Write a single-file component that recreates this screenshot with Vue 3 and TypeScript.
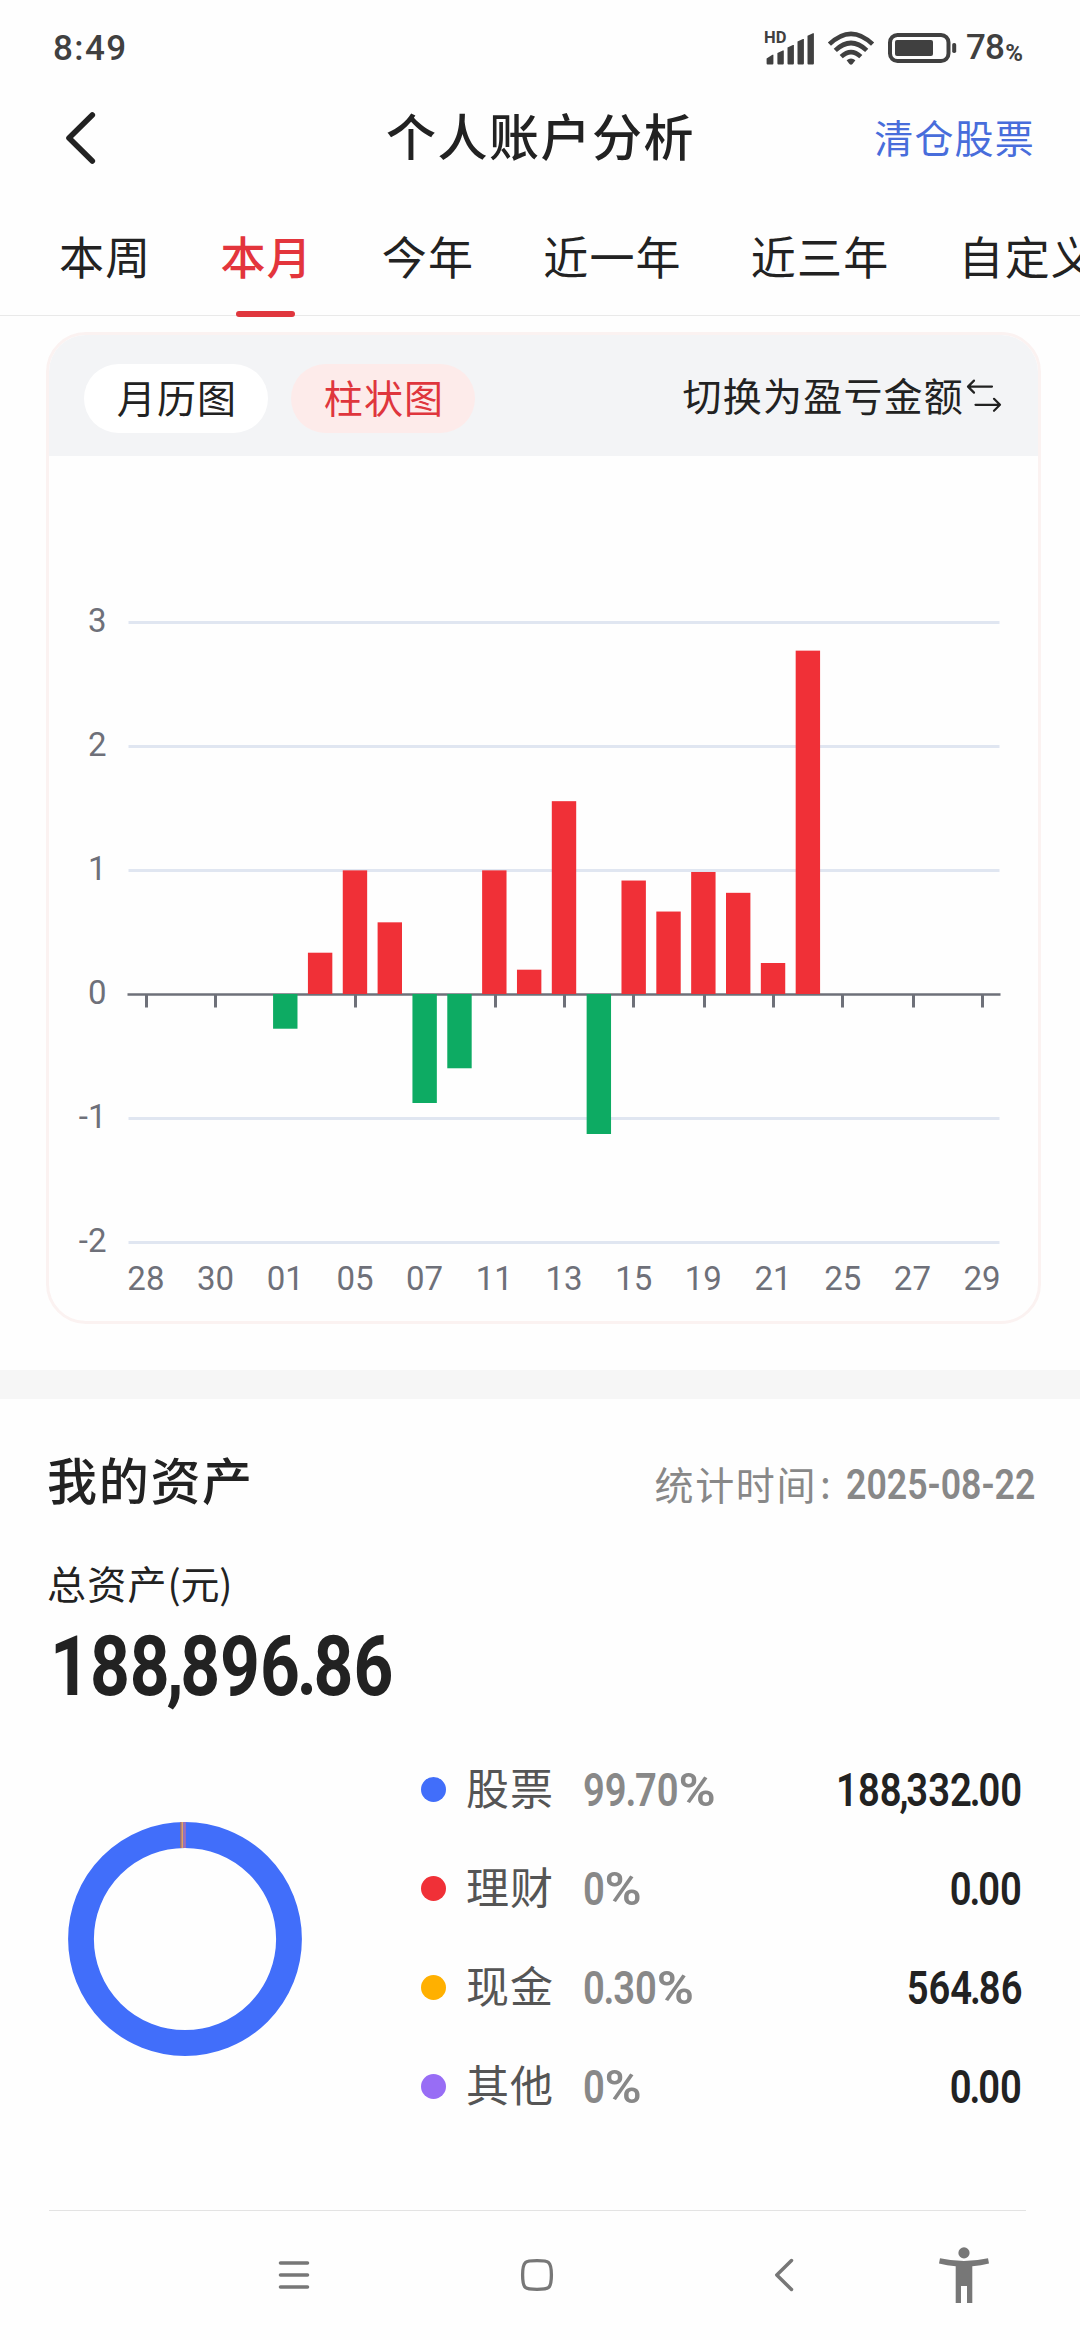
<script setup lang="ts">
interface Tab {
  label: string
  active?: boolean
}

interface Asset {
  name: string
  percent: string
  amount: string
  color: string
}

const tabs: Tab[] = [
  { label: '本周' },
  { label: '本月', active: true },
  { label: '今年' },
  { label: '近一年' },
  { label: '近三年' },
  { label: '自定义' },
]

const total = '188,896.86'

const assets: Asset[] = [
  { name: '股票', percent: '99.70', amount: '188,332.00', color: '#416efa' },
  { name: '理财', percent: '0', amount: '0.00', color: '#f03037' },
  { name: '现金', percent: '0.30', amount: '564.86', color: '#ffb000' },
  { name: '其他', percent: '0', amount: '0.00', color: '#986df5' },
]

// Splits a figure so that its separators can be set tighter than its digits
const parts = (s: string): string[] => s.split(/([.,])/)
const isSep = (s: string): boolean => s === '.' || s === ','

// Chart geometry, in pixels of the plot's own viewBox
const plotLeft = 79.5
const plotRight = 950.5
const zeroY = 538
const unit = 124
const step = (plotRight - plotLeft) / 25
const barWidth = 24.4

const levels = [3, 2, 1, 0, -1, -2]
const dates = ['28', '30', '01', '05', '07', '11', '13', '15', '19', '21', '25', '27', '29']
const ticks = [97.5, 166.5, 236.5, 306.5, 375.5, 446.5, 515.5, 584.5, 655.5, 724.5, 793.5, 864.5, 933.5]
const firstBar = 4
const returns = [
  -0.28, 0.333, 0.997, 0.578, -0.879, -0.599, 0.997, 0.196,
  1.555, -1.129, 0.915, 0.665, 0.984, 0.816, 0.25, 2.769,
]

const centerX = (i: number): number => plotLeft + step * (i + 0.5)
const levelY = (v: number): number => zeroY - v * unit

const bars = returns.map((v, i) => ({
  x: centerX(i + firstBar) - barWidth / 2,
  y: v > 0 ? levelY(v) : zeroY,
  h: Math.abs(v) * unit,
  color: v > 0 ? '#f03037' : '#0dab63',
}))
</script>

<template>
  <div class="page">
    <div class="status">
      <span class="clock">8:49</span>
      <div class="status-right">
        <span class="hd">HD</span>
        <svg class="signal" width="52" height="34" viewBox="0 0 52 34">
          <path
            d="M2.6 32.4v-5l5.800-3.600h1v8.600a1 1 0 0 1-1 1H3.600a1 1 0 0 1-1-1zM13.400 32.400v-10.500l5.400-2.500h1v13a1 1 0 0 1-1 1h-4.400a1 1 0 0 1-1-1zM23.500 32.400V16.500l5.400-2.500h1v18.400a1 1 0 0 1-1 1h-4.400a1 1 0 0 1-1-1zM33.500 32.400V10.500L38.900 8h1v24.400a1 1 0 0 1-1 1h-4.400a1 1 0 0 1-1-1zM43.500 32.400V4.800L48.900 2.300h1v30.100a1 1 0 0 1-1 1h-4.400a1 1 0 0 1-1-1z"
            fill="#404040"
          />
        </svg>
        <svg class="wifi" width="48" height="34" viewBox="0 0 48 34">
          <g fill="none" stroke="#404040" stroke-width="4.600">
            <path d="M2.400 13.200Q24-7.600 45.600 13.200" />
            <path d="M8.300 19.400Q24 4.600 39.700 19.400" />
            <path d="M14.200 25.600Q24 16.600 33.800 25.600" />
          </g>
          <path d="M19.600 29.200Q24 25.800 28.400 29.200L25.500 33Q24 34.300 22.500 33z" fill="#404040" />
        </svg>
        <svg class="battery" width="70" height="32" viewBox="0 0 70 32">
          <rect x="2" y="3" width="58.500" height="26" rx="7.500" fill="none" stroke="#404040" stroke-width="4" />
          <rect x="7" y="8" width="38" height="16" rx="2" fill="#404040" />
          <rect x="64.200" y="11" width="4" height="10" rx="1.800" fill="#404040" />
        </svg>
        <span class="level">78</span><span class="pct">%</span>
      </div>
    </div>

    <header class="header">
      <svg class="back" width="32" height="54" viewBox="0 0 32 54">
        <path d="M27.300 4L4 27L27.300 50" fill="none" stroke="#222" stroke-width="5.600" stroke-linecap="round" stroke-linejoin="round" />
      </svg>
      <h1 class="title">个人账户分析</h1>
      <a class="link">清仓股票</a>
    </header>

    <nav class="tabs">
      <span v-for="t in tabs" :key="t.label" class="tab" :class="{ active: t.active }">{{ t.label }}</span>
    </nav>

    <section class="card">
      <div class="card-head">
        <span class="pill">月历图</span>
        <span class="pill selected">柱状图</span>
        <span class="switch">切换为盈亏金额</span>
        <svg class="swap" width="36" height="36" viewBox="0 0 36 36">
          <g fill="none" stroke="#222" stroke-width="2.200" stroke-linecap="round" stroke-linejoin="round">
            <path d="M26 8.600H2M8 2.600L2 8.600L8 14.600" />
            <path d="M9.500 26.800H34M28 20.800L34 26.800L28 32.800" />
          </g>
        </svg>
      </div>
      <svg class="chart" width="989" height="864" viewBox="0 0 989 864">
        <g v-for="v in levels" :key="v">
          <line v-if="v !== 0" :x1="plotLeft" :x2="plotRight" :y1="levelY(v) + 0.5" :y2="levelY(v) + 0.5" stroke="#e0e6f1" stroke-width="3" />
          <text class="axis" text-anchor="end" x="57.500" :y="levelY(v) + 9.500">{{ v }}</text>
        </g>
        <g stroke="#6e7079" stroke-width="3">
          <line v-for="x in ticks" :key="x" :x1="x" :x2="x" y1="538" y2="551.500" />
        </g>
        <line :x1="plotLeft - 1" :x2="plotRight + 1" y1="538.500" y2="538.500" stroke="#6e7079" stroke-width="2.600" />
        <rect v-for="(b, i) in bars" :key="i" :x="b.x" :y="b.y" :width="barWidth" :height="b.h" :fill="b.color" />
        <text v-for="(d, i) in dates" :key="d" class="axis" text-anchor="middle" :x="centerX(i * 2)" y="834">{{ d }}</text>
      </svg>
    </section>

    <div class="band"></div>

    <section class="assets">
      <div class="assets-head">
        <h2 class="assets-title">我的资产</h2>
        <span class="stat-label">统计时间</span>
        <span class="stat-colon">:</span>
        <span class="stat-date">2025-08-22</span>
      </div>
      <div class="total-label">总资产<span class="unit">(元)</span></div>
      <div class="total"><span v-for="(p, i) in parts(total)" :key="i" :class="{ sep: isSep(p) }">{{ p }}</span></div>

      <div class="breakdown">
        <svg class="donut" width="234" height="234" viewBox="0 0 234 234">
          <circle cx="117" cy="117" r="104" fill="none" stroke="#416efa" stroke-width="25.800" />
          <path d="M113 0v26" stroke="#a8705f" stroke-width="1.500" />
          <path d="M114.400 0v26" stroke="#e5a262" stroke-width="1.800" />
          <path d="M116.700 0v26" stroke="#a06fb8" stroke-width="2.400" />
        </svg>
        <ul class="legend">
          <li v-for="a in assets" :key="a.name" class="row">
            <i class="dot" :style="{ background: a.color }"></i>
            <span class="name">{{ a.name }}</span>
            <span class="percent"><span v-for="(p, i) in parts(a.percent)" :key="i" :class="{ sep: isSep(p) }">{{ p }}</span><span class="sign">%</span></span>
            <span class="amount"><span v-for="(p, i) in parts(a.amount)" :key="i" :class="{ sep: isSep(p) }">{{ p }}</span></span>
          </li>
        </ul>
      </div>
    </section>

    <footer class="sysnav">
      <svg class="menu" width="32" height="34" viewBox="0 0 32 34">
        <path d="M2.500 5H29.500M2.500 17H29.500M2.500 29H29.500" stroke="#777" stroke-width="3.600" stroke-linecap="round" />
      </svg>
      <svg class="home" width="34" height="34" viewBox="0 0 34 34">
        <path d="M17 2.600C28.500 2.600 31.400 2.600 31.400 17S28.500 31.400 17 31.400S2.600 31.400 2.600 17S5.500 2.600 17 2.600z" fill="none" stroke="#777" stroke-width="3.300" />
      </svg>
      <svg class="prev" width="20" height="34" viewBox="0 0 20 34">
        <path d="M17.500 2.500L2.800 17L17.500 31.500" fill="none" stroke="#777" stroke-width="3.500" stroke-linecap="round" stroke-linejoin="round" />
      </svg>
      <svg class="person" width="50" height="56" viewBox="0 0 50 56">
        <circle cx="25" cy="5.900" r="5.600" fill="#777" />
        <path d="M1 11.200Q25 16.600 49 11.200L50 16.600Q42 18.600 33.300 19.300V56H28V39H22V56H16.700V19.300Q8 18.600 0 16.600z" fill="#777" />
      </svg>
    </footer>
  </div>
</template>

<style>
body {
  background: #fefefe;
}
</style>

<style scoped>
.page {
  width: 1080px;
  height: 2340px;
  overflow: hidden;
  background: #fefefe;
  color: #222;
  font-family: 'Noto Sans CJK SC', 'Noto Sans', sans-serif;
  display: flex;
  flex-direction: column;
}
.status {
  height: 95px;
  flex: none;
  display: flex;
  align-items: center;
  justify-content: space-between;
  padding: 0 58px 0 53px;
  color: #404040;
  font-family: Roboto, sans-serif;
  font-weight: 500;
  font-size: 35px;
  line-height: 40px;
}
.clock {
  padding-top: 2px;
  letter-spacing: 1.400px;
}
.status-right {
  position: relative;
  display: flex;
  align-items: center;
  width: 258px;
}
.hd {
  position: absolute;
  left: 0;
  top: 1px;
  font-size: 16.500px;
  font-weight: 700;
  line-height: 20px;
}
.signal {
  margin-right: 11px;
  flex: none;
}
.wifi {
  margin-right: 13px;
  flex: none;
}
.battery {
  margin-right: 8px;
  flex: none;
}
.level {
  padding-top: 1px;
  letter-spacing: -0.800px;
}
.pct {
  font-size: 24px;
  font-weight: 700;
  line-height: 24px;
  padding-top: 10px;
  margin-left: 1px;
}
.header {
  height: 85px;
  flex: none;
  display: flex;
  align-items: center;
  justify-content: space-between;
  padding: 0 45px 0 65px;
}
.back {
  margin-right: 110px;
}
.title {
  margin: 0;
  padding-bottom: 8px;
  font-size: 50px;
  line-height: 60px;
  font-weight: 500;
  letter-spacing: 1.500px;
}
.link {
  color: #486ddb;
  padding-bottom: 4px;
  font-size: 39px;
  line-height: 50px;
  letter-spacing: 1.200px;
}
.tabs {
  height: 135px;
  flex: none;
  border-bottom: 1px solid #e9e9e9;
  display: flex;
  gap: 69px;
  padding-left: 59px;
  white-space: nowrap;
}
.tab {
  position: relative;
  font-size: 45px;
  line-height: 60px;
  padding-top: 46px;
  letter-spacing: 1.200px;
}
.tab.active {
  color: #e3353c;
  font-weight: 500;
}
.tab.active::after {
  content: '';
  position: absolute;
  left: 16px;
  bottom: -2px;
  width: 59px;
  height: 6px;
  border-radius: 3px;
  background: #e0373e;
}
.card {
  box-sizing: border-box;
  width: 995px;
  height: 992px;
  flex: none;
  margin: 16px 0 0 46px;
  border: 3px solid #fbf2f1;
  border-radius: 40px;
  overflow: hidden;
}
.card-head {
  height: 121px;
  background: #f3f4f6;
  display: flex;
  align-items: center;
  padding: 0 36px 0 35px;
}
.pill {
  width: 184px;
  height: 69px;
  margin: 6px 23px 0 0;
  border-radius: 35px;
  background: #fff;
  text-align: center;
  text-indent: 2px;
  font-size: 39px;
  line-height: 65px;
  letter-spacing: 1.200px;
}
.pill.selected {
  color: #df363d;
  background: #fdebea;
}
.switch {
  margin-left: auto;
  padding-bottom: 4px;
  font-size: 39px;
  line-height: 60px;
  letter-spacing: 1.200px;
}
.swap {
  flex: none;
  margin: 0 0 0 2px;
}
.chart {
  display: block;
}
.axis {
  font: 400 33px Roboto, sans-serif;
  fill: #6e7079;
}
.band {
  height: 29px;
  flex: none;
  margin-top: 46px;
  background: #f6f6f6;
}
.assets {
  height: 811px;
  flex: none;
  margin: 0 54px 0 49px;
  border-bottom: 1px solid #e3e3e3;
  display: flex;
  flex-direction: column;
}
.assets-head {
  display: flex;
  align-items: center;
  height: 70px;
  margin: 46px -9px 0 -2px;
}
.assets-title {
  margin: 0 auto 4px 0;
  font-size: 50px;
  line-height: 60px;
  font-weight: 500;
  letter-spacing: 1.700px;
}
.stat-label {
  color: #888;
  font-size: 39px;
  line-height: 60px;
  padding-top: 6px;
  letter-spacing: 1.600px;
}
.stat-colon {
  box-sizing: border-box;
  color: #888;
  font-size: 39px;
  line-height: 60px;
  width: 29px;
  padding: 4px 0 0 3px;
}
.stat-date {
  color: #888;
  font: 600 42px/60px Roboto, sans-serif;
  width: 189px;
  padding-top: 9px;
  white-space: nowrap;
  transform: scaleX(0.85);
  transform-origin: left center;
}
.total-label {
  margin: 37px 0 0 -2px;
  font-size: 39px;
  line-height: 60px;
  letter-spacing: 1.200px;
}
.unit {
  letter-spacing: -0.300px;
}
.total {
  margin: 5px 0 0 1px;
  font: 700 84px/100px Roboto, sans-serif;
  transform: scaleX(0.828);
  transform-origin: left center;
}
.total .sep {
  margin: 0 -4px;
}
.breakdown {
  display: flex;
  margin-top: 23px;
}
.donut {
  margin: 82px 117px 0 19px;
  flex: none;
}
.legend {
  flex: 1;
  list-style: none;
  margin: 0;
  padding: 0 4px 0 0;
}
.row {
  height: 99px;
  display: flex;
  align-items: center;
}
.dot {
  width: 25px;
  height: 25px;
  margin-left: 2px;
  border-radius: 50%;
}
.name {
  width: 117px;
  margin-left: 20px;
  padding-bottom: 7px;
  color: #555;
  font-size: 43px;
  line-height: 60px;
  letter-spacing: 1px;
}
.percent {
  color: #888;
  font: 600 46px/60px Roboto, sans-serif;
  transform: scaleX(0.83);
  transform-origin: left center;
}
.sign {
  display: inline-block;
  transform: scaleX(1.320);
  transform-origin: left center;
}
.percent .sep {
  margin: 0 -1.500px;
}
.amount {
  margin-left: auto;
  font: 600 46px/60px Roboto, sans-serif;
  transform: scaleX(0.83);
  transform-origin: right center;
}
.amount .sep {
  margin: 0 -2.500px;
}
.sysnav {
  height: 127px;
  flex: none;
  display: flex;
  align-items: center;
  padding-left: 278px;
}
.home {
  margin-left: 210px;
}
.prev {
  margin-left: 220px;
}
.person {
  margin-left: 145px;
}
</style>
